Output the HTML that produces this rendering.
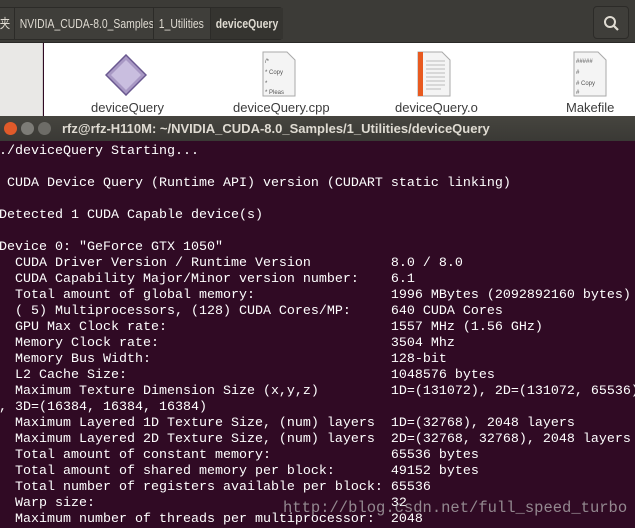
<!DOCTYPE html>
<html><head><meta charset="utf-8"><style>
*{margin:0;padding:0;box-sizing:border-box}
body{width:635px;height:528px;overflow:hidden;background:#300a24;position:relative;font-family:"Liberation Sans","Noto Sans CJK SC",sans-serif}
#top{position:absolute;left:0;top:0;width:635px;height:43px;background:#3c3b37;border-bottom:1px solid #2a2927}
.crumbs{position:absolute;left:-6px;top:7px;height:33px;border:1px solid #2c2b28;border-radius:4px;background:#3f3e3a;color:#dfdbd2;font-size:13px;width:289px}
.seg{position:absolute;top:0;height:31px;line-height:31px;border-right:1px solid #2c2b28;white-space:nowrap;overflow:hidden}
.seg span{display:inline-block;transform:scaleX(0.8);transform-origin:left;padding-left:6px}
.search{position:absolute;left:593px;top:6px;width:36px;height:33px;border:1px solid #2c2b28;border-radius:4px;background:#3f3e3a}
#side{position:absolute;left:0;top:43px;width:43px;height:74px;background:#e9e8e6;border-right:1px solid #cfcdca}
#files{position:absolute;left:44px;top:43px;width:591px;height:74px;background:#fff}
.lbl{position:absolute;top:100px;font-size:13px;color:#3c3c3c}
#tb{position:absolute;left:0;top:116px;width:635px;height:25px;background:linear-gradient(#46453f,#3a3935);color:#dfdbd2;font-size:13px;font-weight:bold}
.btn{position:absolute;top:6px;width:13px;height:13px;border-radius:50%}
#term{position:absolute;left:-1px;top:144px;font-family:"Liberation Mono",monospace;font-size:13.33px;line-height:16px;color:#fff;white-space:pre}
#wm{position:absolute;left:283px;top:499px;font-family:"Liberation Mono",monospace;font-size:15.5px;color:rgba(190,190,190,0.7);white-space:pre}
</style></head><body>
<div id="top">
 <div class="crumbs">
  <div class="seg" style="left:0;width:20px"><span>夹</span></div>
  <div class="seg" style="left:20px;width:139px"><span>NVIDIA_CUDA-8.0_Samples</span></div>
  <div class="seg" style="left:159px;width:57px"><span>1_Utilities</span></div>
  <div class="seg" style="left:216px;width:72px;background:#353430;font-weight:bold;border-right:none"><span>deviceQuery</span></div>
 </div>
 <div class="search"><svg width="36" height="33"><circle cx="16" cy="15" r="5" stroke="#dfdbd2" stroke-width="2" fill="none"/><line x1="20" y1="19" x2="24" y2="23" stroke="#dfdbd2" stroke-width="2.2"/></svg></div>
</div>
<div id="side"></div>
<div id="files"></div>
<svg style="position:absolute;left:105px;top:54px" width="42" height="42"><polygon points="21,1 41,21 21,41 1,21" fill="#a898c4" stroke="#6a5890" stroke-width="1.5"/><polygon points="21,6 36,21 21,36 6,21" fill="#c9bedf"/></svg>
<svg style="position:absolute;left:262px;top:51px" width="34" height="46"><path d="M1,1H25L33,9V45H1Z" fill="#f4f4f4" stroke="#aaa"/><text x="3" y="12" font-size="6" fill="#555" font-family="Liberation Sans">/*</text><text x="3" y="23" font-size="6" fill="#555" font-family="Liberation Sans">* Copy</text><text x="3" y="34" font-size="6" fill="#555" font-family="Liberation Sans">*</text><text x="3" y="43" font-size="6" fill="#555" font-family="Liberation Sans">* Pleas</text></svg>
<svg style="position:absolute;left:417px;top:51px" width="34" height="46"><path d="M1,1H25L33,9V45H1Z" fill="#f4f4f4" stroke="#aaa"/><rect x="1" y="1" width="5" height="44" fill="#e85a20"/><g stroke="#bbb"><line x1="9" y1="10" x2="28" y2="10"/><line x1="9" y1="14" x2="28" y2="14"/><line x1="9" y1="18" x2="28" y2="18"/><line x1="9" y1="22" x2="28" y2="22"/><line x1="9" y1="26" x2="28" y2="26"/><line x1="9" y1="30" x2="28" y2="30"/><line x1="9" y1="34" x2="28" y2="34"/><line x1="9" y1="38" x2="24" y2="38"/></g></svg>
<svg style="position:absolute;left:573px;top:51px" width="34" height="46"><path d="M1,1H25L33,9V45H1Z" fill="#f4f4f4" stroke="#aaa"/><text x="3" y="12" font-size="6" fill="#555" font-family="Liberation Sans">#####</text><text x="3" y="23" font-size="6" fill="#555" font-family="Liberation Sans">#</text><text x="3" y="34" font-size="6" fill="#555" font-family="Liberation Sans"># Copy</text><text x="3" y="43" font-size="6" fill="#555" font-family="Liberation Sans">#</text></svg>
<div class="lbl" style="left:91px">deviceQuery</div>
<div class="lbl" style="left:233px">deviceQuery.cpp</div>
<div class="lbl" style="left:395px">deviceQuery.o</div>
<div class="lbl" style="left:566px">Makefile</div>
<div id="tb">
 <div class="btn" style="left:4px;background:#e05a2a"></div>
 <div class="btn" style="left:21px;background:#7d7c77"></div>
 <div class="btn" style="left:38px;background:#6d6c67"></div>
 <div style="position:absolute;left:62px;top:5px">rfz@rfz-H110M: ~/NVIDIA_CUDA-8.0_Samples/1_Utilities/deviceQuery</div>
</div>
<div id="term">./deviceQuery Starting...

 CUDA Device Query (Runtime API) version (CUDART static linking)

Detected 1 CUDA Capable device(s)

Device 0: "GeForce GTX 1050"
  CUDA Driver Version / Runtime Version          8.0 / 8.0
  CUDA Capability Major/Minor version number:    6.1
  Total amount of global memory:                 1996 MBytes (2092892160 bytes)
  ( 5) Multiprocessors, (128) CUDA Cores/MP:     640 CUDA Cores
  GPU Max Clock rate:                            1557 MHz (1.56 GHz)
  Memory Clock rate:                             3504 Mhz
  Memory Bus Width:                              128-bit
  L2 Cache Size:                                 1048576 bytes
  Maximum Texture Dimension Size (x,y,z)         1D=(131072), 2D=(131072, 65536)
, 3D=(16384, 16384, 16384)
  Maximum Layered 1D Texture Size, (num) layers  1D=(32768), 2048 layers
  Maximum Layered 2D Texture Size, (num) layers  2D=(32768, 32768), 2048 layers
  Total amount of constant memory:               65536 bytes
  Total amount of shared memory per block:       49152 bytes
  Total number of registers available per block: 65536
  Warp size:                                     32
  Maximum number of threads per multiprocessor:  2048</div>
<div id="wm">http://blog.csdn.net/full_speed_turbo</div>
</body></html>
